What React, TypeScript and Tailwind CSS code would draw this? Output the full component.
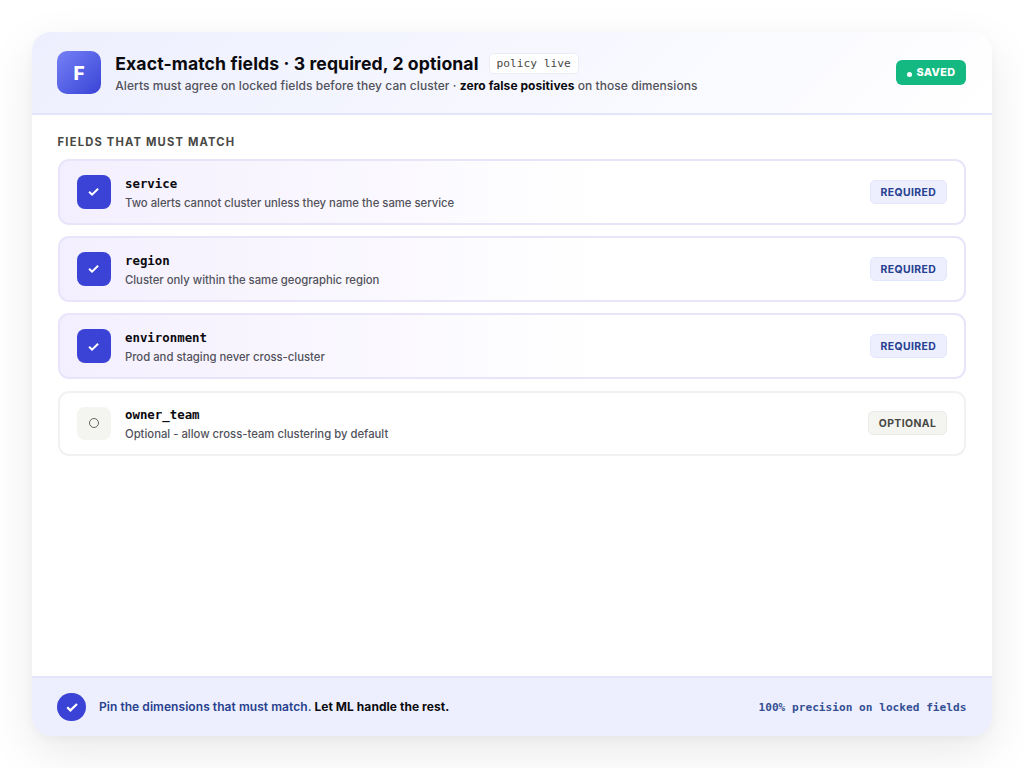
import React from "react";
import clsx from "clsx";

interface Field {
  name: string;
  description: string;
  required: boolean;
}

const fields: Field[] = [
  {
    name: "service",
    description: "Two alerts cannot cluster unless they name the same service",
    required: true,
  },
  {
    name: "region",
    description: "Cluster only within the same geographic region",
    required: true,
  },
  {
    name: "environment",
    description: "Prod and staging never cross-cluster",
    required: true,
  },
  {
    name: "owner_team",
    description: "Optional - allow cross-team clustering by default",
    required: false,
  },
];

const CheckMark: React.FC<{ className?: string }> = ({ className }) => (
  <svg viewBox="0 0 12 12" fill="none" stroke="white" strokeWidth="2.2" className={className}>
    <path d="M1.2 6.2 4.4 9.4 11 3" />
  </svg>
);

const FieldRow: React.FC<{ field: Field }> = ({ field }) => (
  <div
    className={clsx(
      "flex h-[65.6px] items-center rounded-[11px] border-2 px-[17.6px]",
      field.required
        ? "border-[#e8e5fb] bg-linear-to-r from-[#f4effe] to-white to-60%"
        : "border-[#f1f1ef] bg-white"
    )}
  >
    <div
      className={clsx(
        "flex size-[33.6px] shrink-0 items-center justify-center rounded-lg",
        field.required ? "bg-[#3b43d6]" : "bg-[#f4f4f0]"
      )}
    >
      {field.required ? (
        <CheckMark className="size-[11px]" />
      ) : (
        <span className="size-[10px] rounded-full border border-[#66665f]" />
      )}
    </div>
    <div className="ml-[14.2px] flex-1 pt-[3px]">
      <div className="font-['DejaVu_Sans_Mono',monospace] text-[12.4px] leading-[18px] font-bold text-[#0a0a0f]">
        {field.name}
      </div>
      <div className="mt-px text-[11.3px] leading-[18px] font-medium text-[#52525b]">
        {field.description}
      </div>
    </div>
    <span
      className={clsx(
        "h-6 rounded-[5px] border px-[9.6px] text-[10.4px] leading-[23px] font-bold tracking-[0.42px]",
        field.required
          ? "border-[#e3e7fd] bg-[#edeffe] text-[#27408f]"
          : "border-[#ebebe7] bg-[#f4f4f0] text-[#484844]"
      )}
    >
      {field.required ? "REQUIRED" : "OPTIONAL"}
    </span>
  </div>
);

const App: React.FC = () => {
  return (
    <div className="h-screen bg-white p-8 font-['Inter',sans-serif]">
      <div className="flex h-[704px] flex-col overflow-hidden rounded-[19px] bg-white shadow-[0_16px_48px_rgba(0,0,0,0.09),0_3px_10px_rgba(0,0,0,0.03)]">
        <header className="flex h-[83px] shrink-0 items-center border-b-2 border-[#e3e5fb] bg-linear-135 from-[#edeffe] to-white pr-[25.6px] pl-[25.3px]">
          <div className="flex size-[43.6px] items-center justify-center rounded-[10px] bg-linear-135 from-[#7680f5] to-[#3b42d6] pt-[3px] text-[19px] font-extrabold text-white">
            F
          </div>
          <div className="ml-[14.4px] flex-1 pt-px">
            <div className="flex h-[22px] items-center">
              <h1 className="pt-px text-[17.6px] font-bold tracking-[0.11px] text-[#0a0a0f]">
                Exact-match fields · 3 required, 2 optional
              </h1>
              <span className="ml-[10px] rounded-[5px] border border-[#ececf2] bg-white px-[7px] font-['DejaVu_Sans_Mono',monospace] text-[11.2px] leading-[19px] text-[#484844]">
                policy live
              </span>
            </div>
            <p className="mt-[2px] text-[12px] leading-[17px] font-medium tracking-[0.06px] text-[#52525b]">
              Alerts must agree on locked fields before they can cluster ·{" "}
              <strong className="font-bold text-[#0a0a0f]">zero false positives</strong> on those
              dimensions
            </p>
          </div>
          <span className="flex h-[25px] items-center rounded-md bg-[#13b981] px-[11px] pt-[2px] text-[10.8px] font-extrabold tracking-[0.4px] text-white">
            <span className="mt-px mr-[4px] size-[5px] rounded-full bg-white" />
            SAVED
          </span>
        </header>

        <main className="flex-1 px-[25.6px] pt-[18px]">
          <h2 className="text-[11.2px] leading-[18px] font-bold tracking-[1.18px] text-[#484844]">
            FIELDS THAT MUST MATCH
          </h2>
          <div className="mt-[8px] flex flex-col gap-[11.6px]">
            {fields.map((field) => (
              <FieldRow key={field.name} field={field} />
            ))}
          </div>
        </main>

        <footer className="flex h-[60px] shrink-0 items-center border-t-2 border-[#e3e5fb] bg-[#edeffe] pr-[25.6px] pl-[25.3px]">
          <div className="flex size-[28.8px] items-center justify-center rounded-full bg-[#3b43d6]">
            <CheckMark className="size-3" />
          </div>
          <p className="ml-[12.8px] flex-1 text-[12px] font-semibold tracking-[0.06px] text-[#27408f]">
            Pin the dimensions that must match.{" "}
            <strong className="font-bold text-[#0a0a0f]">Let ML handle the rest.</strong>
          </p>
          <span className="pt-[2px] font-['DejaVu_Sans_Mono',monospace] text-[11.15px] font-bold text-[#354f94]">
            100% precision on locked fields
          </span>
        </footer>
      </div>
    </div>
  );
};

export default App;
